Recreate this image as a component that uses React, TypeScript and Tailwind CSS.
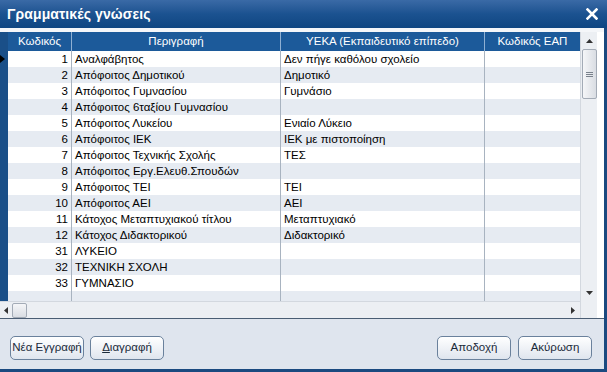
import React from "react";

const rows: [string, string, string][] = [
  ["1", "Αναλφάβητος", "Δεν πήγε καθόλου σχολείο"],
  ["2", "Απόφοιτος Δημοτικού", "Δημοτικό"],
  ["3", "Απόφοιτος Γυμνασίου", "Γυμνάσιο"],
  ["4", "Απόφοιτος 6ταξίου Γυμνασίου", ""],
  ["5", "Απόφοιτος Λυκείου", "Ενιαίο Λύκειο"],
  ["6", "Απόφοιτος ΙΕΚ", "ΙΕΚ με πιστοποίηση"],
  ["7", "Απόφοιτος Τεχνικής Σχολής", "ΤΕΣ"],
  ["8", "Απόφοιτος Εργ.Ελευθ.Σπουδών", ""],
  ["9", "Απόφοιτος ΤΕΙ", "ΤΕΙ"],
  ["10", "Απόφοιτος ΑΕΙ", "ΑΕΙ"],
  ["11", "Κάτοχος Μεταπτυχιακού τίτλου", "Μεταπτυχιακό"],
  ["12", "Κάτοχος Διδακτορικού", "Διδακτορικό"],
  ["31", "ΛΥΚΕΙΟ", ""],
  ["32", "ΤΕΧΝΙΚΗ ΣΧΟΛΗ", ""],
  ["33", "ΓΥΜΝΑΣΙΟ", ""],
  ["", "", ""],
];

const cols = "grid grid-cols-[8px_64px_209px_204px_95px]";

function Btn({ children, w }: { children: React.ReactNode; w: string }) {
  return (
    <button
      className={`${w} h-[24px] rounded-[5px] border border-[#6a819c] bg-gradient-to-b from-[#ffffff] to-[#dfe5ee] text-[11.5px] text-[#1a2a3a] flex items-center justify-center whitespace-nowrap px-0`}
    >
      {children}
    </button>
  );
}

export default function App() {
  return (
    <div
      className="w-[607px] h-[372px] bg-[#dfe5ee] flex flex-col overflow-hidden relative"
      style={{ fontFamily: '"Liberation Sans", Arial, sans-serif' }}
    >
      {/* Title bar */}
      <div className="h-[28px] shrink-0 bg-gradient-to-b from-[#3a6aa6] via-[#1b5290] to-[#0f4682] flex items-center justify-between pl-[7px] pr-[9px]">
        <span className="text-white font-bold text-[14px] tracking-[0.1px]">Γραμματικές γνώσεις</span>
        <svg width="12" height="12" viewBox="0 0 12 12">
          <path d="M1.5 1.5 L10.5 10.5 M10.5 1.5 L1.5 10.5" stroke="white" strokeWidth="2.6" strokeLinecap="square" />
        </svg>
      </div>
      <div className="flex flex-1 min-h-0">
        <div className="flex-1 flex flex-col min-w-0">
          <div className="h-[4px] bg-[#f4f6f9]" />
          {/* Grid area */}
          <div className="h-[287px] flex border-b border-[#4a5d73] bg-white">
            <div className="w-[580px] flex flex-col overflow-hidden">
              <div className="h-[269px] overflow-hidden text-[11.5px]">
                {/* header */}
                <div className={`${cols} h-[19px] bg-[#1c5a9a] text-white`}>
                  <div className="bg-[#1a4f88]" />
                  <div className="flex items-center justify-center border-r border-[#8fb0d3]">Κωδικός</div>
                  <div className="flex items-center justify-center border-r border-[#8fb0d3]">Περιγραφή</div>
                  <div className="flex items-center justify-center border-r border-[#8fb0d3]">ΥΕΚΑ (Εκπαιδευτικό επίπεδο)</div>
                  <div className="flex items-center justify-center">Κωδικός ΕΑΠ</div>
                </div>
                {rows.map((r, i) => (
                  <div
                    key={i}
                    className={`${cols} h-[16px] text-black ${i % 2 === 0 ? "bg-white" : "bg-[#e6ebf2]"}`}
                  >
                    <div className="bg-[#1a4f88] flex items-center">
                      {i === 0 && (
                        <svg width="5" height="8" viewBox="0 0 5 8">
                          <path d="M0 0 L5 4 L0 8 Z" fill="black" />
                        </svg>
                      )}
                    </div>
                    <div className="border-r border-[#a8b3c0] text-right pr-[3px] leading-[16px]">{r[0]}</div>
                    <div className="border-r border-[#a8b3c0] pl-[3px] leading-[16px] whitespace-nowrap">{r[1]}</div>
                    <div className="border-r border-[#a8b3c0] pl-[3px] leading-[16px] whitespace-nowrap">{r[2]}</div>
                    <div />
                  </div>
                ))}
              </div>
              {/* horizontal scrollbar */}
              <div className="h-[17px] bg-[#eceff3] border-t border-[#d3d8df] flex items-center">
                <div className="w-[12px] flex justify-center">
                  <svg width="4" height="7" viewBox="0 0 4 7"><path d="M4 0 L0 3.5 L4 7 Z" fill="#333" /></svg>
                </div>
                <div className="w-[15px] h-[15px] rounded-[2px] border border-[#a3abb6] bg-gradient-to-b from-[#f5f6f8] to-[#d9dde3]" />
                <div className="flex-1" />
                <div className="w-[14px] flex justify-center">
                  <svg width="4" height="7" viewBox="0 0 4 7"><path d="M0 0 L4 3.5 L0 7 Z" fill="#333" /></svg>
                </div>
              </div>
            </div>
            {/* vertical scrollbar */}
            <div className="w-[17px] bg-[#eceff3] border-l border-[#d3d8df] flex flex-col items-center">
              <div className="h-[17px] flex items-center justify-center">
                <svg width="7" height="4" viewBox="0 0 7 4"><path d="M0 4 L3.5 0 L7 4 Z" fill="#333" /></svg>
              </div>
              <div className="w-[15px] h-[50px] rounded-[2px] border border-[#a3abb6] bg-gradient-to-r from-[#f5f6f8] to-[#d9dde3] flex flex-col items-center justify-center gap-[1px]">
                <div className="w-[7px] h-[1px] bg-[#7a828c]" />
                <div className="w-[7px] h-[1px] bg-[#7a828c]" />
                <div className="w-[7px] h-[1px] bg-[#7a828c]" />
              </div>
              <div className="flex-1" />
              <div className="h-[17px] flex items-center justify-center mb-[17px]">
                <svg width="7" height="4" viewBox="0 0 7 4"><path d="M0 0 L3.5 4 L7 0 Z" fill="#333" /></svg>
              </div>
            </div>
          </div>
          {/* footer */}
          <div className="flex-1 flex items-center justify-between pl-[10px] pr-[12px] pt-[7px]">
            <div className="flex gap-[6px]">
              <Btn w="w-[74px]">Νέα Εγγραφή</Btn>
              <Btn w="w-[74px]"><span><span className="underline">Δ</span>ιαγραφή</span></Btn>
            </div>
            <div className="flex gap-[7px]">
              <Btn w="w-[74px]">Αποδοχή</Btn>
              <Btn w="w-[74px]">Ακύρωση</Btn>
            </div>
          </div>
          <div className="h-[3px] bg-[#1b4a80]" />
        </div>
        <div className="w-[3px] bg-[#1b4a80]" />
      </div>
    </div>
  );
}
